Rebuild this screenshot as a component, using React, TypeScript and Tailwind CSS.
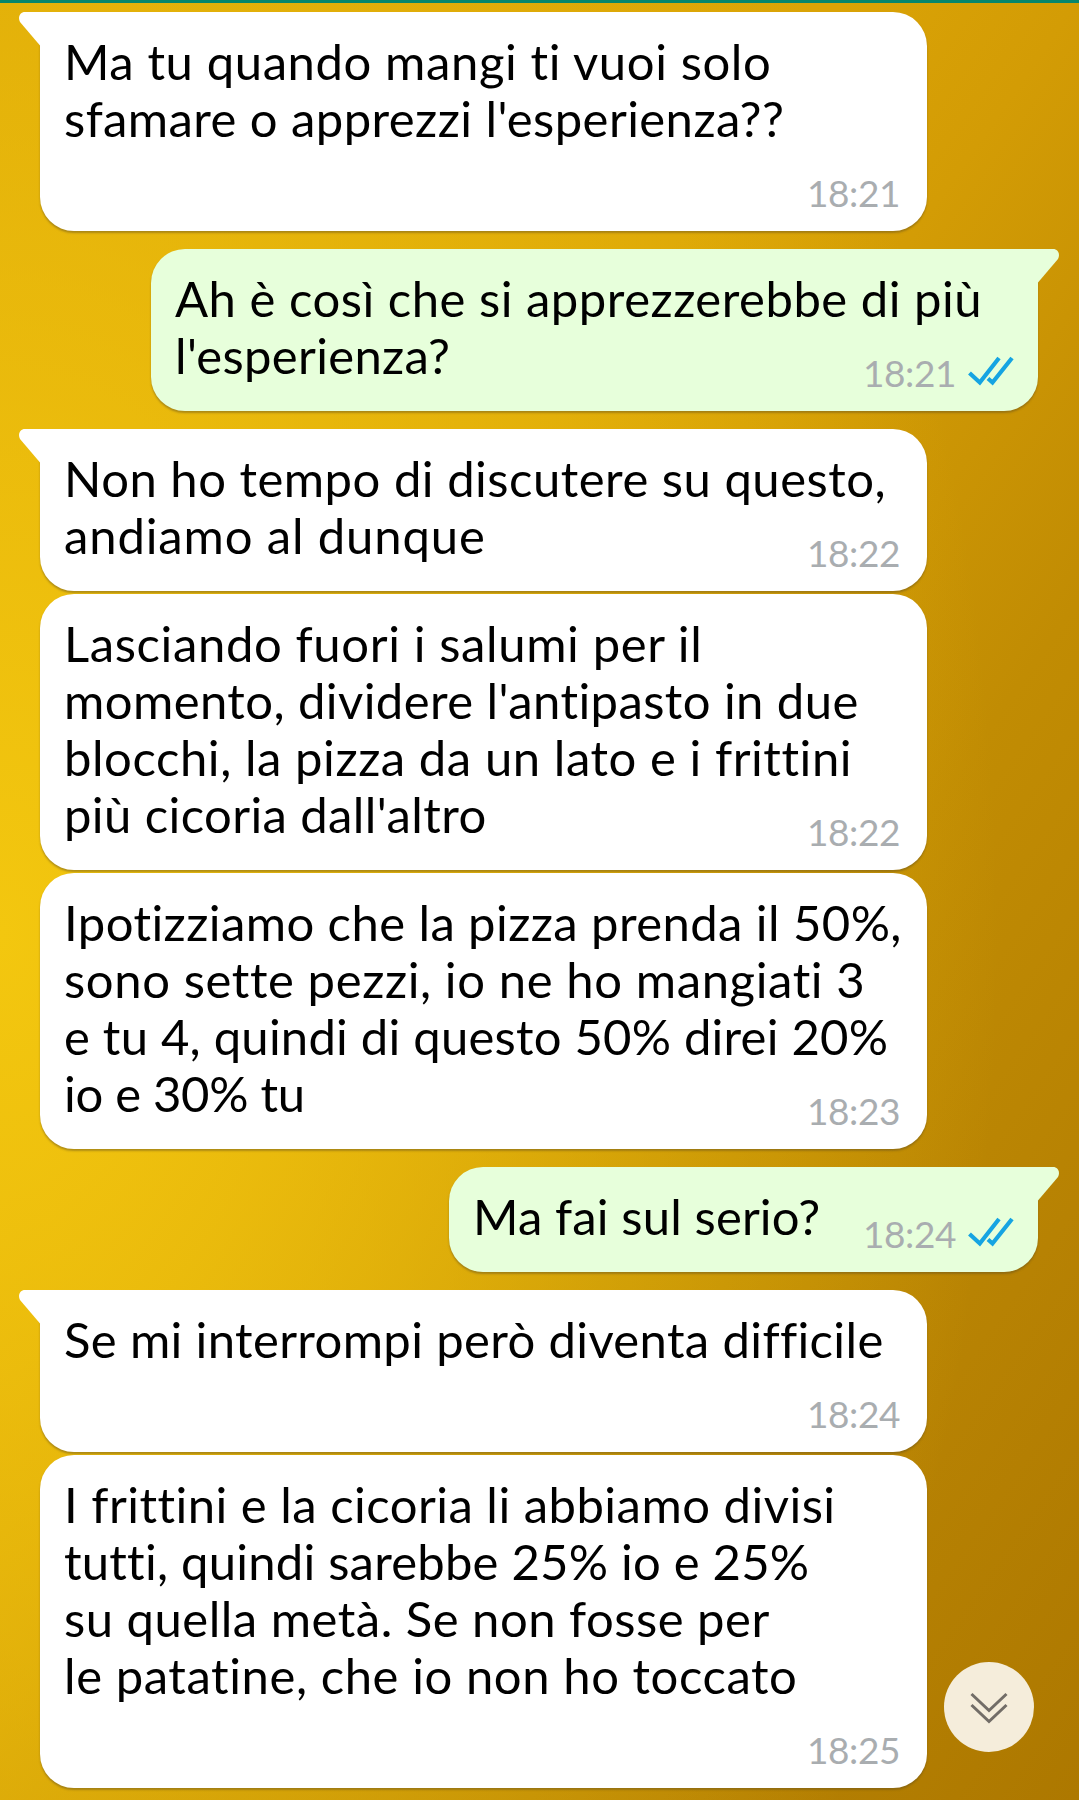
import { clsx } from 'clsx';

interface Line {
  text: string;
  tracking: string;
}

interface Message {
  id: number;
  lines: Line[];
  time: string;
  sent?: boolean;
  // first bubble of a group has the pointed corner
  tail?: boolean;
  size: string;
}

const messages: Message[] = [
  {
    id: 1,
    time: '18:21',
    tail: true,
    size: 'h-[219px] w-[887px]',
    lines: [
      { text: 'Ma tu quando mangi ti vuoi solo', tracking: 'tracking-[0.6px]' },
      { text: "sfamare o apprezzi l'esperienza??", tracking: 'tracking-[0.42px]' },
    ],
  },
  {
    id: 2,
    time: '18:21',
    sent: true,
    tail: true,
    size: 'mt-[18px] h-[162px] w-[887px]',
    lines: [
      { text: 'Ah è così che si apprezzerebbe di più', tracking: 'tracking-[0.51px]' },
      { text: "l'esperienza?", tracking: 'tracking-[0.33px]' },
    ],
  },
  {
    id: 3,
    time: '18:22',
    tail: true,
    size: 'mt-[18px] h-[162px] w-[887px]',
    lines: [
      { text: 'Non ho tempo di discutere su questo,', tracking: 'tracking-[0.5px]' },
      { text: 'andiamo al dunque', tracking: 'tracking-[0.86px]' },
    ],
  },
  {
    id: 4,
    time: '18:22',
    size: 'mt-[3px] h-[276px] w-[887px]',
    lines: [
      { text: 'Lasciando fuori i salumi per il', tracking: 'tracking-[0.62px]' },
      { text: "momento, dividere l'antipasto in due", tracking: 'tracking-[0.42px]' },
      { text: 'blocchi, la pizza da un lato e i frittini', tracking: 'tracking-[0.56px]' },
      { text: "più cicoria dall'altro", tracking: 'tracking-[0.4px]' },
    ],
  },
  {
    id: 5,
    time: '18:23',
    size: 'mt-[3px] h-[276px] w-[887px]',
    lines: [
      { text: 'Ipotizziamo che la pizza prenda il 50%,', tracking: 'tracking-[0.42px]' },
      { text: 'sono sette pezzi, io ne ho mangiati 3', tracking: 'tracking-[0.6px]' },
      { text: 'e tu 4, quindi di questo 50% direi 20%', tracking: 'tracking-[0.22px]' },
      { text: 'io e 30% tu', tracking: 'tracking-[-0.3px]' },
    ],
  },
  {
    id: 6,
    time: '18:24',
    sent: true,
    tail: true,
    size: 'mt-[18px] h-[105px] w-[589px]',
    lines: [{ text: 'Ma fai sul serio?', tracking: 'tracking-[0.14px]' }],
  },
  {
    id: 7,
    time: '18:24',
    tail: true,
    size: 'mt-[18px] h-[162px] w-[887px]',
    lines: [{ text: 'Se mi interrompi però diventa difficile', tracking: 'tracking-[0.36px]' }],
  },
  {
    id: 8,
    time: '18:25',
    size: 'mt-[3px] h-[333px] w-[887px]',
    lines: [
      { text: 'I frittini e la cicoria li abbiamo divisi', tracking: 'tracking-[0.48px]' },
      { text: 'tutti, quindi sarebbe 25% io e 25%', tracking: 'tracking-[0.22px]' },
      { text: 'su quella metà. Se non fosse per', tracking: 'tracking-[0.5px]' },
      { text: 'le patatine, che io non ho toccato', tracking: 'tracking-[0.57px]' },
    ],
  },
];

function Tail({ sent }: { sent?: boolean }) {
  return (
    <svg
      viewBox="0 0 22 34"
      className={clsx('absolute top-0 h-[34px] w-[22px]', sent ? '-right-[21px] -scale-x-100 text-[#e7ffdb]' : '-left-[21px] text-white')}
      aria-hidden="true"
    >
      <path d="M22 0H6C1 0-1.500 5 1 10L21 33.500H22Z" fill="currentColor" />
    </svg>
  );
}

function ReadTicks() {
  return (
    <svg viewBox="0 0 46 30" className="mb-[5px] h-[30px] w-[46px]" fill="none" stroke="#16a4e2" strokeWidth="4.2" aria-label="Read">
      <path d="M1.500 17L11.800 26.500L31 2" />
      <path d="M20 22.500L24.500 26.500L44 2" />
    </svg>
  );
}

function Bubble({ message }: { message: Message }) {
  const { lines, time, sent, tail, size } = message;

  return (
    <div
      className={clsx(
        'relative shrink-0 rounded-[34px] px-6 pt-[21px] shadow-[0_2px_2px_rgba(100,80,30,0.45)]',
        size,
        sent ? 'self-end bg-[#e7ffdb]' : 'self-start bg-white',
        tail && (sent ? 'rounded-tr-none' : 'rounded-tl-none'),
      )}
    >
      {tail && <Tail sent={sent} />}
      {lines.map((line) => (
        <p key={line.text} className={clsx('h-[57px] text-[49px] leading-[57px] whitespace-nowrap text-black', line.tracking)}>
          {line.text}
        </p>
      ))}
      <div className={clsx('absolute bottom-[17px] flex items-center', sent ? 'right-[24px] gap-[12px]' : 'right-[27px]')}>
        <span className="text-[37px] leading-[42px] tracking-[-0.4px] text-[#a9adb0]">{time}</span>
        {sent && <ReadTicks />}
      </div>
    </div>
  );
}

export default function App() {
  return (
    <div className="relative h-[1800px] w-[1079px] overflow-hidden border-t-[3px] border-[#06866c] bg-[radial-gradient(ellipse_1000px_1600px_at_0px_930px,#f3c70f_0%,rgba(243,199,15,0)_100%),linear-gradient(125deg,#d8a206_0%,#daa306_36%,#d39c05_46%,#ca9404_55%,#c18c03_64%,#b78203_82%,#ad7800_100%)] font-[Lato,sans-serif]">
      <main className="flex flex-col pt-[9px] pr-[41px] pl-10">
        {messages.map((message) => (
          <Bubble key={message.id} message={message} />
        ))}
      </main>

      {/* Scroll to latest */}
      <button
        className="absolute right-[45px] bottom-[48px] flex size-[90px] items-center justify-center rounded-full bg-[#f5eddb] pt-[2px]"
        aria-label="Scroll to bottom"
      >
        <svg viewBox="0 0 38 32" className="h-[32px] w-[38px]" fill="none" stroke="#726d67" strokeWidth="3">
          <path d="M1.500 2L19 18.500L36.500 2" />
          <path d="M1.500 13L19 29.500L36.500 13" />
        </svg>
      </button>
    </div>
  );
}
